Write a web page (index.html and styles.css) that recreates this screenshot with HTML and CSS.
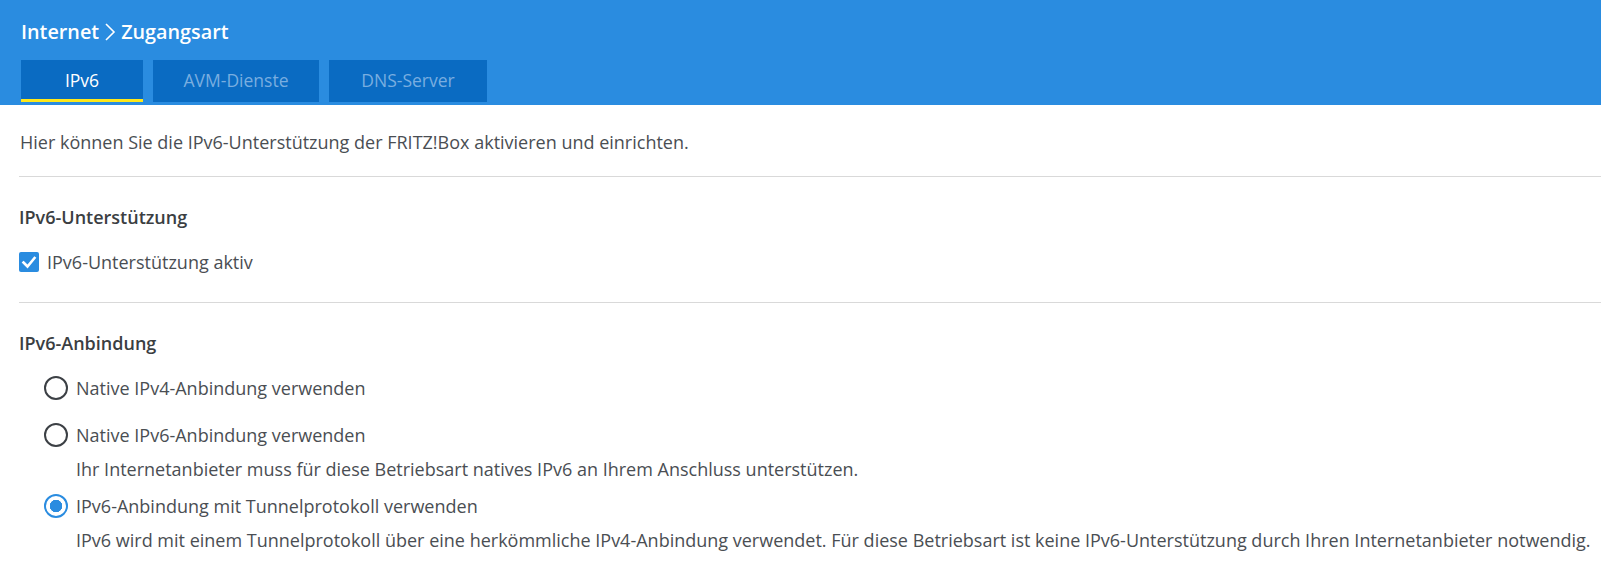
FILE: index.html
```html
<!DOCTYPE html>
<html lang="de">
<head>
<meta charset="utf-8">
<title>Internet – Zugangsart</title>
<link rel="stylesheet" href="styles.css">
</head>
<body>
<header class="topbar">
  <h1 class="crumbs">
    <span>Internet</span>
    <svg class="crumb-sep" width="12" height="20" viewBox="0 0 12 20"><polyline points="2,2 10,10 2,18" fill="none" stroke="#fff" stroke-width="1.6"/></svg>
    <span>Zugangsart</span>
  </h1>
  <nav class="tabs">
    <a class="tab tab-ipv6 active">IPv6</a>
    <a class="tab tab-avm">AVM-Dienste</a>
    <a class="tab tab-dns">DNS-Server</a>
  </nav>
</header>

<main class="content">
  <p class="intro">Hier können Sie die IPv6-Unterstützung der FRITZ!Box aktivieren und einrichten.</p>
  <hr class="sep">

  <section class="block">
    <h2 class="block-title">IPv6-Unterstützung</h2>
    <label class="check-row">
      <span class="checkbox">
        <svg width="20" height="20" viewBox="0 0 20 20"><polyline points="4.5,10.5 8.5,14.5 15.5,6" fill="none" stroke="#fff" stroke-width="2.6" stroke-linecap="square"/></svg>
      </span>
      <span>IPv6-Unterstützung aktiv</span>
    </label>
  </section>
  <hr class="sep">

  <section class="block">
    <h2 class="block-title">IPv6-Anbindung</h2>
    <div class="options">
      <div class="option">
        <label class="radio-row"><span class="radio"></span><span>Native IPv4-Anbindung verwenden</span></label>
      </div>
      <div class="option">
        <label class="radio-row"><span class="radio"></span><span>Native IPv6-Anbindung verwenden</span></label>
        <p class="option-desc">Ihr Internetanbieter muss für diese Betriebsart natives IPv6 an Ihrem Anschluss unterstützen.</p>
      </div>
      <div class="option">
        <label class="radio-row"><span class="radio checked"></span><span>IPv6-Anbindung mit Tunnelprotokoll verwenden</span></label>
        <p class="option-desc">IPv6 wird mit einem Tunnelprotokoll über eine herkömmliche IPv4-Anbindung verwendet. Für diese Betriebsart ist keine IPv6-Unterstützung durch Ihren Internetanbieter notwendig.</p>
      </div>
    </div>
  </section>
</main>
</body>
</html>
```

FILE: styles.css
```css
* { box-sizing: border-box; }

html, body {
  margin: 0;
  padding: 0;
  background: #fff;
}

body {
  font-family: "Open Sans", Lato, "Liberation Sans", sans-serif;
  font-size: 18px;
  line-height: 24px;
  color: #4a4e53;
  overflow: hidden;
}

/* blue title bar with breadcrumb and tabs */
.topbar {
  background: #2a8ce0;
  height: 105px;
  padding: 20px 0 0 21px;
}

.crumbs {
  margin: 0;
  height: 24px;
  display: flex;
  align-items: center;
  gap: 5px;
  font-size: 19.8px;
  font-weight: 600;
  color: #fff;
  line-height: 24px;
}

.crumb-sep { display: block; }

.tabs {
  display: flex;
  gap: 10px;
  margin-top: 16px;
}

.tab {
  height: 42px;
  display: flex;
  align-items: center;
  justify-content: center;
  background: #0a6bc2;
  color: #79aee0;
  font-size: 17.5px;
  text-decoration: none;
  border-bottom: 3px solid transparent;
}

.tab.active {
  color: #fff;
  border-bottom-color: #ffe81a;
}

.tab-ipv6 { width: 122px; }
.tab-avm { width: 166px; }
.tab-dns { width: 158px; }

/* page body */
.content {
  padding-left: 19px;
}

.intro {
  margin: 25px 0 22px 1px;
}

.sep {
  margin: 0;
  border: 0;
  border-top: 1px solid #d9d9d9;
  height: 0;
}

.block {
  padding-top: 28px;
  padding-bottom: 28px;
}

.block-title {
  margin: 0 0 21px;
  font-size: 18px;
  font-weight: 600;
  color: #3b3e42;
  line-height: 24px;
}

.check-row {
  display: flex;
  align-items: center;
  gap: 8px;
  height: 24px;
}

.checkbox {
  width: 20px;
  height: 20px;
  border-radius: 2px;
  background: #2a8ce0;
  display: block;
}

.checkbox svg { display: block; }

.options {
  padding-left: 25px;
}

.option {
  padding-bottom: 13px;
}

.radio-row {
  display: flex;
  align-items: center;
  gap: 8px;
  height: 24px;
  margin-bottom: 10px;
}

.radio {
  width: 24px;
  height: 24px;
  border-radius: 50%;
  border: 2.5px solid #3c4045;
  display: block;
  flex: none;
}

.radio.checked {
  border-color: #2a8ce0;
  background: radial-gradient(circle, #2a8ce0 0 6px, #fff 6.5px);
}

.option-desc {
  margin: 0 0 0 32px;
  white-space: nowrap;
}
```
